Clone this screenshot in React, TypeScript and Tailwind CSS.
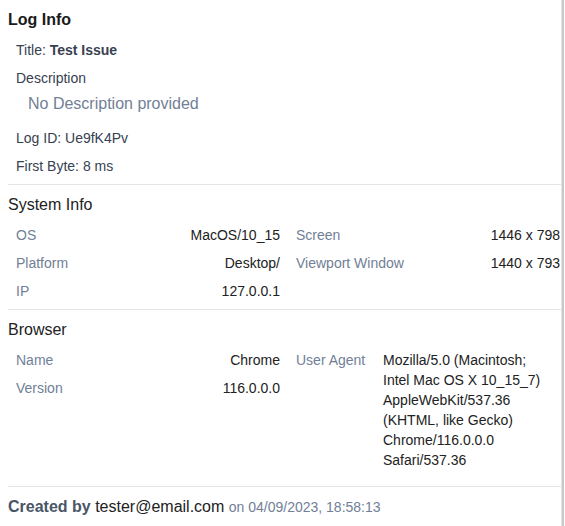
import React from "react"

const SYSTEM_ROWS: [string, string, string, string][] = [
  ["OS", "MacOS/10_15", "Screen", "1446 x 798"],
  ["Platform", "Desktop/", "Viewport Window", "1440 x 793"],
  ["IP", "127.0.0.1", "", ""],
]

const UA_LINES = [
  "Mozilla/5.0 (Macintosh;",
  "Intel Mac OS X 10_15_7)",
  "AppleWebKit/537.36",
  "(KHTML, like Gecko)",
  "Chrome/116.0.0.0",
  "Safari/537.36",
]

function Row({ label, value }: { label: string; value: string }) {
  return (
    <div className="flex h-7 items-center justify-between text-sm">
      <span className="text-[#718096]">{label}</span>
      <span className="text-[#222]">{value}</span>
    </div>
  )
}

export default function App() {
  return (
    <div className="flex h-[526px] w-[565px] overflow-hidden bg-white font-['Liberation_Sans',Arial,sans-serif]">
      <div className="w-[562px] border-r border-[#e5e5e5] pl-2 pt-[8px]">
        {/* Log info */}
        <h2 className="text-base font-bold leading-6 text-[#1a1a1a]">Log Info</h2>
        <div className="mt-1 pl-2 text-sm text-[#374151]">
          <div className="flex h-7 items-center">
            Title:&nbsp;<span className="font-bold">Test Issue</span>
          </div>
          <div className="flex h-7 items-center">Description</div>
          <div className="pl-3 text-base leading-6 text-[#718096]">No Description provided</div>
          <div className="mt-2 flex h-7 items-center">Log ID: Ue9fK4Pv</div>
          <div className="flex h-7 items-center">First Byte: 8 ms</div>
        </div>

        <div className="mt-1 h-px bg-[#e5e5e5]" />

        {/* System info */}
        <h3 className="mt-2 text-base leading-6 text-[#222]">System Info</h3>
        <div className="mt-1 grid w-[553px] grid-cols-2 gap-x-4 pl-2 pr-px">
          {SYSTEM_ROWS.map(([l1, v1, l2, v2]) => (
            <React.Fragment key={l1}>
              <Row label={l1} value={v1} />
              {l2 ? <Row label={l2} value={v2} /> : <div className="h-7" />}
            </React.Fragment>
          ))}
        </div>

        <div className="mt-1 h-px bg-[#e5e5e5]" />

        {/* Browser */}
        <h3 className="mt-2 text-base leading-6 text-[#222]">Browser</h3>
        <div className="mt-1 grid w-[553px] grid-cols-2 gap-x-4 pl-2 pr-px">
          <div>
            <Row label="Name" value="Chrome" />
            <Row label="Version" value="116.0.0.0" />
          </div>
          <div className="flex text-sm">
            <span className="flex h-7 w-[87px] shrink-0 items-center text-[#718096]">User Agent</span>
            <div className="pt-1 leading-5 whitespace-nowrap text-[#222]">
              {UA_LINES.map((line) => (
                <div key={line}>{line}</div>
              ))}
            </div>
          </div>
        </div>

        <div className="mt-4 h-px bg-[#e5e5e5]" />

        {/* Footer */}
        <p className="mt-2 text-base leading-6 text-[#222]">
          <span className="font-bold text-[#4a5568]">Created by</span> tester@email.com{" "}
          <span className="text-sm text-[#718096]">on 04/09/2023, 18:58:13</span>
        </p>
      </div>
      <div className="w-[2px] bg-[#c8c8c8]" />
    </div>
  )
}
